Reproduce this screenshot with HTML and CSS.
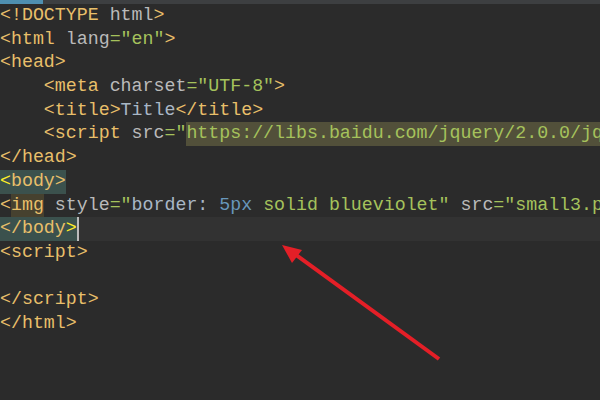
FILE: index.html
```html
<!DOCTYPE html>
<html lang="en">
<head>
    <meta charset="UTF-8">
    <title>Editor</title>
    <link rel="stylesheet" href="styles.css">
</head>
<body>
    <div class="editor">
        <div class="tab-strip"><div class="tab-active"></div></div>
        <div class="code">
<div class="line"><span class="tag">&lt;!DOCTYPE </span><span class="attr">html</span><span class="tag">&gt;</span></div>
<div class="line"><span class="tag">&lt;html </span><span class="attr">lang</span><span class="val">="en"</span><span class="tag">&gt;</span></div>
<div class="line"><span class="tag">&lt;head&gt;</span></div>
<div class="line">    <span class="tag">&lt;meta </span><span class="attr">charset</span><span class="val">="UTF-8"</span><span class="tag">&gt;</span></div>
<div class="line">    <span class="tag">&lt;title&gt;</span><span class="text">Title</span><span class="tag">&lt;/title&gt;</span></div>
<div class="line">    <span class="tag">&lt;script </span><span class="attr">src</span><span class="val">="<span class="url">https://libs.baidu.com/jquery/2.0.0/jq</span></span></div>
<div class="line"><span class="tag">&lt;/head&gt;</span></div>
<div class="line"><span class="tag match"><span class="brace">&lt;</span>body&gt;</span></div>
<div class="line"><span class="tag">&lt;<span class="ident">img</span> </span><span class="attr">style</span><span class="val">="</span><span class="text">border: </span><span class="num">5px</span><span class="val"> solid blueviolet"</span> <span class="attr">src</span><span class="val">="small3.p</span></div>
<div class="line current"><span class="tag match">&lt;/body<span class="brace">&gt;</span></span><span class="caret"></span></div>
<div class="line"><span class="tag">&lt;script&gt;</span></div>
<div class="line"> </div>
<div class="line"><span class="tag">&lt;/script&gt;</span></div>
<div class="line"><span class="tag">&lt;/html&gt;</span></div>
        </div>
        <svg class="arrow" width="600" height="400" viewBox="0 0 600 400">
            <line x1="439" y1="359" x2="292" y2="252" stroke="#e41f27" stroke-width="4"/>
            <polygon points="282,245 302,250 292,263" fill="#e41f27"/>
        </svg>
    </div>
</body>
</html>
```

FILE: styles.css
```css
* {
    margin: 0;
    padding: 0;
    box-sizing: border-box;
}

body {
    background: #2b2b2b;
    width: 600px;
    height: 400px;
    overflow: hidden;
}

.editor {
    position: relative;
    width: 600px;
    height: 400px;
    background: #2b2b2b;
    overflow: hidden;
}

.tab-strip {
    height: 4px;
    background: #3d3f41;
}

.tab-active {
    width: 43px;
    height: 4px;
    background: #4e8fb0;
}

.code {
    font-family: "Liberation Mono", "DejaVu Sans Mono", monospace;
    font-size: 18.28px;
    color: #a9b7c6;
}

.line {
    height: 23.7px;
    line-height: 23.7px;
    white-space: pre;
    overflow: hidden;
}

.line.current {
    background: #323232;
}

.tag { color: #e8bf6a; }
.attr { color: #bababa; }
.val { color: #a5c25c; }
.text { color: #a9b7c6; }
.num { color: #6897bb; }

.tag,
.attr,
.val,
.text,
.num,
.url,
.ident {
    display: inline-block;
    height: 23.7px;
    vertical-align: top;
}

.url {
    background: #52503a;
}

.ident {
    background: #46412f;
}

.match {
    background: #3b514d;
}

.brace {
    color: #ffef28;
}

.caret {
    display: inline-block;
    width: 2px;
    height: 23.7px;
    vertical-align: top;
    background: #bbbbbb;
}

.arrow {
    position: absolute;
    left: 0;
    top: 0;
    pointer-events: none;
}
```
